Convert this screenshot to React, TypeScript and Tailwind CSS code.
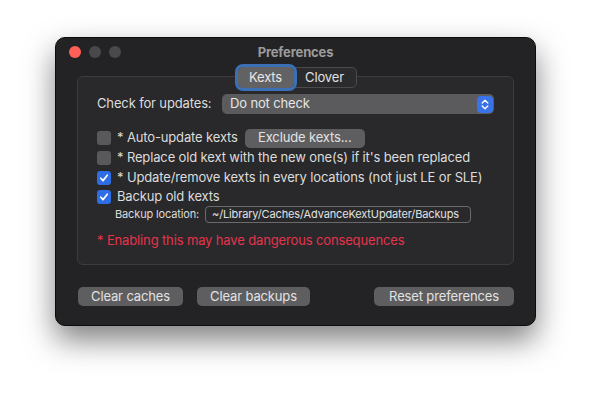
import React from "react";

function Checkbox({ checked }: { checked?: boolean }) {
  return checked ? (
    <span className="flex h-[14px] w-[14px] shrink-0 items-center justify-center rounded-[3px] bg-[#2f6de6]">
      <svg width="10" height="10" viewBox="0 0 10 10" fill="none">
        <path d="M1.8 5.2 L4 7.6 L8.3 2.2" stroke="white" strokeWidth="1.7" strokeLinecap="round" strokeLinejoin="round" />
      </svg>
    </span>
  ) : (
    <span className="h-[14px] w-[14px] shrink-0 rounded-[3px] bg-[#59595b]" />
  );
}

function Button({ label, className }: { label: string; className: string }) {
  return (
    <div
      className={`flex h-[19px] items-center justify-center rounded-[5px] bg-[#5e5e60] text-[13px] text-[#e2e2e2] ${className}`}
    >
      {label}
    </div>
  );
}

export default function App() {
  return (
    <div
      className="h-[400px] w-[592px] overflow-hidden bg-white pl-[55px] pt-[37px] tracking-[-0.14px]"
      style={{ fontFamily: "Inter, 'Noto Sans', sans-serif" }}
    >
      {/* WINDOW */}
      <div className="relative flex h-[289px] w-[481px] flex-col rounded-[10px] border border-[#0c0c0c] bg-[#232325] px-[21px] shadow-[0_14px_30px_rgba(0,0,0,0.5)]">
        {/* TITLE BAR */}
        <div className="relative flex h-[28px] items-center">
          <div className="absolute left-[-8px] top-[8px] flex gap-[8px]">
            <span className="h-[12px] w-[12px] rounded-full bg-[#fe5f57]" />
            <span className="h-[12px] w-[12px] rounded-full bg-[#49494b]" />
            <span className="h-[12px] w-[12px] rounded-full bg-[#49494b]" />
          </div>
          <div className="w-full pt-[2px] text-center text-[13px] font-bold text-[#9b9b9b]">Preferences</div>
        </div>

        {/* TABS */}
        <div className="relative z-10 mt-[1px] flex justify-center pl-[3px]">
          <div className="flex h-[21px] rounded-[5px] border border-[#4a4a4c] bg-[#2b2b2d]">
            <div className="-my-px -ml-px flex w-[56px] items-center justify-center rounded-[5px] bg-[#626264] text-[13px] text-[#e6e6e6] outline outline-[3px] outline-[#3b6fb6]">
              Kexts
            </div>
            <div className="flex w-[62px] items-center justify-center text-[13px] text-[#e0e0e0]">Clover</div>
          </div>
        </div>

        {/* GROUP BOX */}
        <div className="-mt-[12px] flex h-[189px] flex-col rounded-[6px] border border-[#3c3c3e] bg-[#29292b] pl-[19px] pr-[19px] pt-[17px] text-[13px] text-[#dcdcdc]">
          <div className="flex h-[20px] items-center">
            <span className="w-[125px]">Check for updates:</span>
            <div className="flex h-[20px] flex-1 items-center justify-between rounded-[5px] bg-[#5b5b5d] pl-[8px] pr-[1px] text-[#e6e6e6]">
              <span>Do not check</span>
              <span className="flex h-[17px] w-[16px] items-center justify-center rounded-[4px] bg-[#3a73e8]">
                <svg width="8" height="11" viewBox="0 0 8 11" fill="none">
                  <path d="M1.2 4 L4 1.3 L6.8 4 M1.2 7 L4 9.7 L6.8 7" stroke="white" strokeWidth="1.3" strokeLinecap="round" strokeLinejoin="round" />
                </svg>
              </span>
            </div>
          </div>

          <div className="mt-[14px] flex h-[20px] items-center gap-[6px]">
            <Checkbox />
            <span>* Auto-update kexts</span>
            <Button label="Exclude kexts..." className="ml-[1px] w-[120px]" />
          </div>
          <div className="flex h-[20px] items-center gap-[6px]">
            <Checkbox />
            <span>* Replace old kext with the new one(s) if it's been replaced</span>
          </div>
          <div className="flex h-[20px] items-center gap-[6px]">
            <Checkbox checked />
            <span>* Update/remove kexts in every locations (not just LE or SLE)</span>
          </div>
          <div className="flex h-[18px] items-center gap-[6px]">
            <Checkbox checked />
            <span>Backup old kexts</span>
          </div>
          <div className="flex h-[17px] items-center pl-[18px] text-[11px]">
            <span className="w-[90px]">Backup location:</span>
            <span className="flex h-[17px] w-[266px] items-center rounded-[4px] border border-[#6a6a6c] pl-[6px] text-[#e2e2e2]">
              ~/Library/Caches/AdvanceKextUpdater/Backups
            </span>
          </div>
          <div className="mt-[10px] flex h-[16px] items-center text-[#e5334b]">* Enabling this may have dangerous consequences</div>
        </div>

        {/* BOTTOM BUTTONS */}
        <div className="mt-[22px] flex items-center pl-[1px]">
          <Button label="Clear caches" className="w-[105px]" />
          <Button label="Clear backups" className="ml-[14px] w-[113px]" />
          <Button label="Reset preferences" className="ml-auto w-[140px]" />
        </div>
      </div>
    </div>
  );
}
